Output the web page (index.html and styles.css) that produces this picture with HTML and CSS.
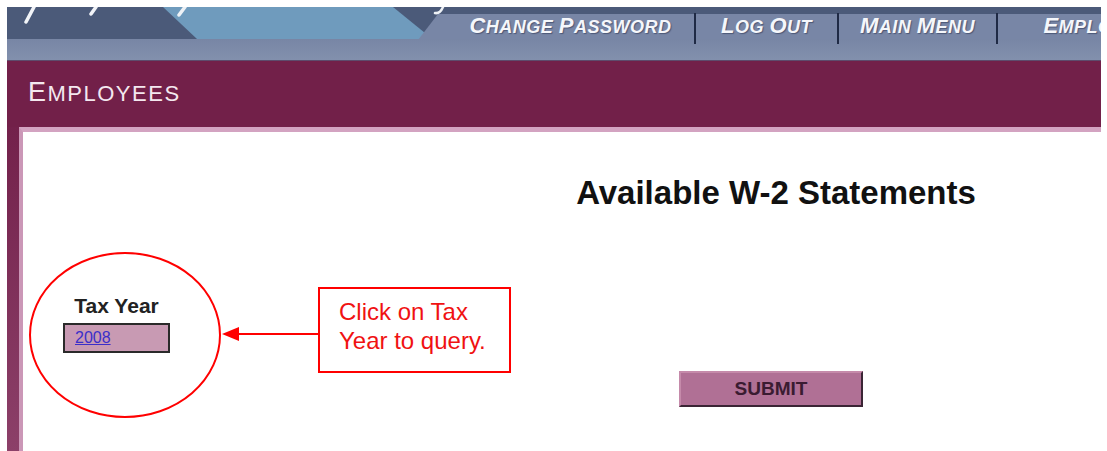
FILE: index.html
```html
<!DOCTYPE html>
<html lang="en">
<head>
<meta charset="utf-8">
<title>Employees - Available W-2 Statements</title>
<link rel="stylesheet" href="styles.css">
</head>
<body>
<div class="page">
  <header class="masthead">
    <svg class="art" width="1094" height="54" viewBox="0 0 1094 54" aria-hidden="true">
      <defs>
        <linearGradient id="band" x1="0" y1="0" x2="0" y2="1">
          <stop offset="0" stop-color="#7886a5"/>
          <stop offset="1" stop-color="#8290ad"/>
        </linearGradient>
      </defs>
      <rect x="0" y="0" width="1094" height="32" fill="#4b5a79"/>
      <polygon points="156,0 386,0 418,26 413,32 190,32" fill="#6f9bbd"/>
      <polygon points="431,7 1094,7 1094,32 411,33" fill="#7886a6"/>
      <rect x="0" y="32" width="1094" height="21" fill="url(#band)"/>
      <rect x="0" y="53" width="1094" height="1" fill="#5d4c6c"/>
      <!-- lower strokes of the logo lettering -->
      <path d="M27 0 L19 15" stroke="#f2f4f8" stroke-width="3.5" stroke-linecap="round"/>
      <path d="M89 0 L84 7" stroke="#f2f4f8" stroke-width="3.5" stroke-linecap="round"/>
      <path d="M178 0 L172 8" stroke="#eef2f6" stroke-width="3.5" stroke-linecap="round"/>
      <path d="M436 0 Q433 7 428 6" stroke="#eef2f6" stroke-width="2.5" fill="none" stroke-linecap="round"/>
    </svg>
    <nav class="nav">
      <a class="nav-item" href="#"><span class="big">C</span>hange <span class="big">P</span>assword</a>
      <a class="nav-item" href="#"><span class="big">L</span>og <span class="big">O</span>ut</a>
      <a class="nav-item" href="#"><span class="big">M</span>ain <span class="big">M</span>enu</a>
      <a class="nav-item last" href="#"><span class="big">E</span>mployees</a>
    </nav>
  </header>

  <div class="section-bar">
    <h1 class="section-title"><span class="big">E</span>mployees</h1>
  </div>

  <div class="frame">
    <main class="panel">
      <form class="w2-form">
        <div class="year-col">
          <div class="year-field">
            <div class="year-label">Tax Year</div>
            <div class="year-box"><a href="#" class="year-link">2008</a></div>
          </div>
        </div>
        <div class="main-col">
          <h2 class="title">Available W-2 Statements</h2>
          <button type="button" class="submit">SUBMIT</button>
        </div>
      </form>
    </main>
  </div>
</div>

<svg class="marks" width="1107" height="451" viewBox="0 0 1107 451" aria-hidden="true">
  <ellipse cx="125" cy="335" rx="95" ry="82" fill="none" stroke="#ff0000" stroke-width="2"/>
  <line x1="236" y1="334" x2="318" y2="334" stroke="#ff0000" stroke-width="2"/>
  <polygon points="222,334 239,327 239,341" fill="#ff0000"/>
</svg>
<div class="callout">Click on Tax<br>Year to query.</div>
</body>
</html>
```

FILE: styles.css
```css
html, body {
  margin: 0;
  padding: 0;
  background: #ffffff;
}

body {
  position: relative;
  width: 1107px;
  height: 451px;
  overflow: hidden;
  font-family: "Liberation Sans", Arial, sans-serif;
}

.page {
  box-sizing: border-box;
  height: 451px;
  padding: 7px 6px 0 7px;
  display: flex;
  flex-direction: column;
}

/* ---------- masthead ---------- */
.masthead {
  position: relative;
  height: 54px;
  flex: none;
  overflow: hidden;
}

.art {
  position: absolute;
  left: 0;
  top: 0;
}

.nav {
  position: relative;
  display: flex;
  padding-left: 440px;
  white-space: nowrap;
}

.nav-item {
  box-sizing: border-box;
  flex: none;
  margin-top: 6px;
  height: 31px;
  padding-top: 2px;
  line-height: 22px;
  text-align: center;
  border-right: 2px solid #1f2a45;
  color: #f5f7fb;
  text-decoration: none;
  font-style: italic;
  font-weight: bold;
  font-size: 18px;
  letter-spacing: 0.5px;
  text-transform: uppercase;
  text-shadow: 1px 1px 1px rgba(40, 50, 80, 0.55);
}

.nav-item .big {
  font-size: 22px;
}

.nav-item:nth-child(1) { width: 249px; }
.nav-item:nth-child(2) { width: 143px; }
.nav-item:nth-child(3) { width: 159px; }
.nav-item.last { width: 210px; border-right: none; }

/* ---------- section bar ---------- */
.section-bar {
  flex: none;
  height: 66px;
  background: #722049;
  box-sizing: border-box;
  padding: 18px 0 0 21px;
}

.section-title {
  margin: 0;
  font-weight: normal;
  font-size: 22px;
  line-height: 27px;
  letter-spacing: 1.5px;
  text-transform: uppercase;
  color: #f4e8ef;
}

.section-title .big {
  font-size: 27px;
}

/* ---------- content frame ---------- */
.frame {
  flex: 1;
  background: linear-gradient(to bottom, #73214b, #8c4069);
  padding-left: 12px;
  display: flex;
}

.panel {
  flex: 1;
  background: #ffffff;
  border-top: 5px solid #d3a3c1;
  border-left: 4px solid #cb97b7;
}

.w2-form {
  display: grid;
  grid-template-columns: 422px 1fr;
}

.year-col {
  padding: 162px 0 0 40px;
}

.year-field {
  width: 107px;
  text-align: center;
}

.year-label {
  font-weight: bold;
  font-size: 21px;
  line-height: 24px;
  color: #222222;
  margin-bottom: 5px;
  white-space: nowrap;
}

.year-box {
  box-sizing: border-box;
  height: 30px;
  border: 2px solid #2a2a2a;
  background: #c89ab3;
  text-align: left;
  padding: 3px 0 0 10px;
}

.year-link {
  font-size: 16px;
  line-height: 20px;
  color: #3b2fc9;
  text-decoration: underline;
}

.main-col {
  display: flex;
  flex-direction: column;
  align-items: center;
}

.title {
  margin: 42px 0 0 6px;
  font-weight: bold;
  font-size: 33px;
  line-height: 38px;
  color: #111111;
}

.submit {
  margin: 159px 4px 0 0;
  box-sizing: border-box;
  width: 184px;
  height: 36px;
  background: #b07095;
  border: 2px solid;
  border-color: #c58aaa #3b2535 #3b2535 #c58aaa;
  font-family: "Liberation Sans", Arial, sans-serif;
  font-weight: bold;
  font-size: 19px;
  color: #3a1b31;
  padding: 0;
}

/* ---------- annotations ---------- */
.marks {
  position: absolute;
  left: 0;
  top: 0;
  pointer-events: none;
}

.callout {
  position: absolute;
  left: 318px;
  top: 287px;
  box-sizing: border-box;
  width: 193px;
  height: 86px;
  border: 2px solid #ff0000;
  background: #ffffff;
  padding: 8px 0 0 19px;
  color: #f01212;
  font-size: 24px;
  line-height: 29px;
  white-space: nowrap;
}
```
